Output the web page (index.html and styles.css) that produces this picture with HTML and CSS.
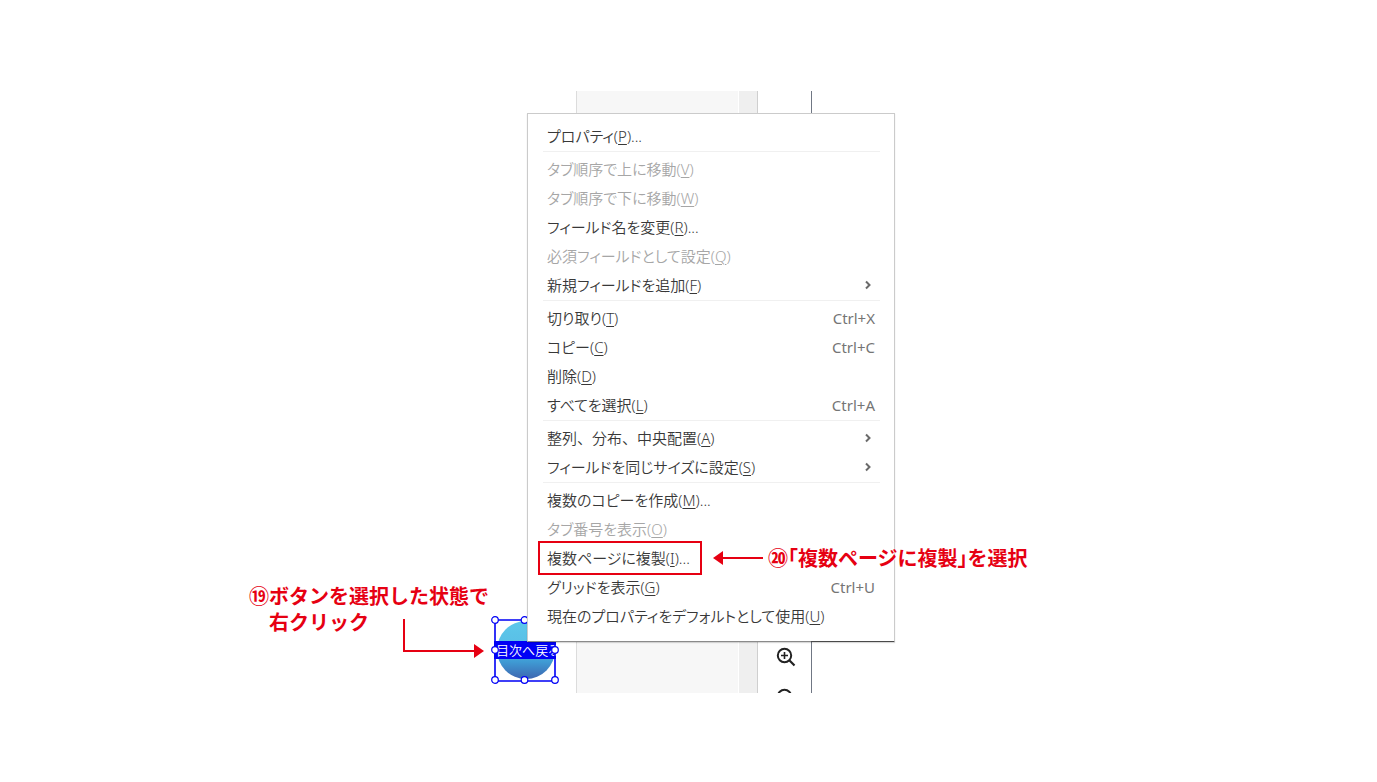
FILE: index.html
```html
<!DOCTYPE html>
<html lang="ja">
<head>
<meta charset="utf-8">
<meta name="viewport" content="width=device-width, initial-scale=1">
<title>複数ページに複製</title>
<link rel="stylesheet" href="styles.css">
</head>
<body>
<main class="page">
  <section class="scene">
    <div class="workspace">
      <div class="document"></div>
      <div class="scrollbar"></div>
      <div class="tools">
        <button class="tool" type="button" aria-label="拡大">
          <svg width="20" height="20" viewBox="0 0 20 20" fill="none" stroke="#222" stroke-width="2"><circle cx="8.5" cy="8.5" r="6.7"/><path d="M5 8.5h7M8.5 5v7" stroke-width="1.6"/><path d="M13.3 13.3l5.2 5.2" stroke-width="2.2"/></svg>
        </button>
        <button class="tool" type="button" aria-label="縮小">
          <svg width="20" height="20" viewBox="0 0 20 20" fill="none" stroke="#222" stroke-width="2"><circle cx="8.5" cy="8.5" r="6.7"/><path d="M5 8.5h7" stroke-width="1.6"/><path d="M13.3 13.3l5.2 5.2" stroke-width="2.2"/></svg>
        </button>
      </div>
    </div>

    <div class="field">
      <button class="field-button" type="button"><span class="field-label">目次へ戻る</span></button>
      <svg class="handles" width="70" height="70" viewBox="0 0 70 70" fill="#fff" stroke="#0000f5" stroke-width="1.2">
        <path d="M5 5h60v61H5z" fill="none" stroke-width="1.6"/>
        <circle cx="5" cy="5" r="3.3"/><circle cx="34.5" cy="5" r="3.3"/><circle cx="65" cy="5" r="3.3"/>
        <circle cx="5" cy="35" r="3.3"/><circle cx="65" cy="35" r="3.3"/>
        <circle cx="5" cy="65" r="3.3"/><circle cx="34.5" cy="65" r="3.3"/><circle cx="65" cy="65" r="3.3"/>
      </svg>
    </div>

    <div class="menu" role="menu">
      <div class="group">
        <button class="item" type="button"><span>プロパティ(<u>P</u>)...</span></button>
      </div>
      <div class="group">
        <button class="item" type="button" disabled><span>タブ順序で上に移動(<u>V</u>)</span></button>
        <button class="item" type="button" disabled><span>タブ順序で下に移動(<u>W</u>)</span></button>
        <button class="item" type="button"><span>フィールド名を変更(<u>R</u>)...</span></button>
        <button class="item" type="button" disabled><span>必須フィールドとして設定(<u>Q</u>)</span></button>
        <button class="item" type="button"><span>新規フィールドを追加(<u>F</u>)</span><svg class="arrow" width="8" height="10" viewBox="0 0 8 10"><path d="M2 1.5l3.5 3.5L2 8.5"/></svg></button>
      </div>
      <div class="group">
        <button class="item" type="button"><span>切り取り(<u>T</u>)</span><kbd>Ctrl+X</kbd></button>
        <button class="item" type="button"><span>コピー(<u>C</u>)</span><kbd>Ctrl+C</kbd></button>
        <button class="item" type="button"><span>削除(<u>D</u>)</span></button>
        <button class="item" type="button"><span>すべてを選択(<u>L</u>)</span><kbd>Ctrl+A</kbd></button>
      </div>
      <div class="group">
        <button class="item" type="button"><span class="full-width">整列、分布、中央配置(<u>A</u>)</span><svg class="arrow" width="8" height="10" viewBox="0 0 8 10"><path d="M2 1.5l3.5 3.5L2 8.5"/></svg></button>
        <button class="item" type="button"><span>フィールドを同じサイズに設定(<u>S</u>)</span><svg class="arrow" width="8" height="10" viewBox="0 0 8 10"><path d="M2 1.5l3.5 3.5L2 8.5"/></svg></button>
      </div>
      <div class="group">
        <button class="item" type="button"><span>複数のコピーを作成(<u>M</u>)...</span></button>
        <button class="item" type="button" disabled><span>タブ番号を表示(<u>O</u>)</span></button>
        <button class="item" type="button"><span>複数ページに複製(<u>I</u>)...</span></button>
        <button class="item" type="button"><span>グリッドを表示(<u>G</u>)</span><kbd>Ctrl+U</kbd></button>
        <button class="item" type="button"><span>現在のプロパティをデフォルトとして使用(<u>U</u>)</span></button>
      </div>
    </div>

    <div class="highlight"></div>

    <div class="note note-right">
      <svg width="50" height="14" viewBox="0 0 50 14" fill="#e60012"><path d="M0 7L10 0v14z"/><path d="M8 6h42v2H8z"/></svg>
      <p>⑳「複数ページに複製」を選択</p>
    </div>

    <div class="note note-left">
      <p>⑲ボタンを選択した状態で</p>
      <p class="second">右クリック</p>
    </div>
    <svg class="elbow" width="82" height="40" viewBox="0 0 82 40"><path d="M1 0v32h72" fill="none" stroke="#e60012" stroke-width="2"/><path d="M81 32L71 25v14z" fill="#e60012"/></svg>
  </section>
</main>
</body>
</html>
```
FILE: styles.css
```css
* { box-sizing: border-box; }

body {
  margin: 0;
  background: #fff;
  color: #383838;
  font-family: "Noto Sans CJK JP", sans-serif;
}

button {
  border: 0;
  padding: 0;
  background: none;
  color: inherit;
  font: inherit;
}

.page {
  display: grid;
  grid-template-columns: 527fr 368px 482fr;
  padding-top: 91px;
}

.scene {
  grid-column: 2;
  position: relative;
  padding: 22px 0 51px;
}

/* Application window behind the menu */
.workspace {
  position: absolute;
  top: 0;
  bottom: 0;
  left: 49px;
  width: 236px;
  display: flex;
  overflow: hidden;
  border-left: 1px solid #dcdcdc;
  border-right: 1px solid #707784;
}

.document {
  flex: 1;
  background: #f7f7f7;
}

.scrollbar {
  width: 20px;
  border-left: 1px solid #fff;
  border-right: 1px solid #cfcfcf;
  background: #efefef;
}

.tools {
  display: flex;
  flex-direction: column;
  gap: 21px;
  width: 53px;
  padding: 556px 0 0 2px;
  align-items: center;
}

.tool,
.tool svg {
  display: block;
  flex: none;
}

/* Selected form field */
.field {
  position: absolute;
  top: 524px;
  left: -37px;
  width: 70px;
  height: 70px;
}

.field-button {
  display: flex;
  align-items: center;
  width: 58px;
  height: 58px;
  margin: 6px 7px;
  border-radius: 50%;
  background: linear-gradient(#5cc8ea 0%, #5abfe6 40%, #3f9bd4 70%, #3d66b0 100%);
}

.field-label {
  flex: none;
  width: 62px;
  height: 18px;
  margin-left: -3px;
  padding-left: 2px;
  background: #0000f5;
  color: #fff;
  font-size: 13px;
  font-weight: 350;
  line-height: 18px;
  font-feature-settings: "palt";
  text-align: left;
  white-space: nowrap;
}

.handles {
  position: absolute;
  top: 0;
  left: 0;
}

/* Context menu */
.menu {
  position: relative;
  padding: 8px 14px 10px 15px;
  border: 1px solid #cbcbcb;
  border-bottom-color: #8a8a8a;
  background: #fff;
  box-shadow: 0 1px 1px rgba(0, 0, 0, 0.15);
}

.menu::after {
  content: "";
  position: absolute;
  right: 0;
  bottom: -1px;
  width: 83px;
  height: 1px;
  background: #4a4a4a;
}

.group + .group {
  padding-top: 3px;
  border-top: 1px solid #f0f0f0;
}

.item {
  display: flex;
  align-items: center;
  justify-content: space-between;
  width: 100%;
  height: 29px;
  padding: 0 5px 2px 4px;
  font-family: "Noto Sans", "Noto Sans CJK JP", sans-serif;
  font-size: 15px;
  font-weight: 350;
  font-feature-settings: "palt";
  white-space: nowrap;
}

.item:disabled { color: #a6a6a6; }

.full-width { font-feature-settings: normal; }

.item u {
  text-decoration-thickness: 1px;
  text-underline-offset: 2px;
}

.item kbd {
  color: #757575;
  font: inherit;
  font-weight: 400;
}

.arrow {
  margin-right: 3px;
  fill: none;
  stroke: #6a6a6a;
  stroke-width: 2;
}

/* Annotations */
.highlight {
  position: absolute;
  top: 450px;
  left: 11px;
  width: 164px;
  height: 34px;
  border: 2px solid #e60012;
}

.note {
  position: absolute;
  color: #e60012;
  font-size: 20px;
  font-weight: 700;
  line-height: 26px;
  font-feature-settings: "halt";
  white-space: nowrap;
  text-shadow: 0 0 1px #fff, 1px 0 1px #fff, -1px 0 1px #fff;
}

.note p { margin: 0; }

.note-right {
  top: 454px;
  left: 186px;
  display: flex;
  align-items: center;
  gap: 5px;
}

.note-left {
  top: 492px;
  left: -278px;
}

.note .second { padding-left: 20px; }

.elbow {
  position: absolute;
  top: 528px;
  left: -124px;
}
```
